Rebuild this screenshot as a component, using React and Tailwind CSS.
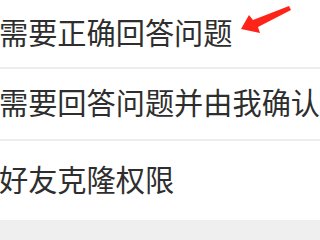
const rows = [
    { text: '需要正确回答问题', h: 'h-[69px]', arrow: true },
    { text: '需要回答问题并由我确认', h: 'h-[72px]' },
    { text: '好友克隆权限', h: 'h-[79px]' },
];

function Arrow() {
    return (
        <svg className="absolute left-[236px] top-[4px]" width="60" height="32" viewBox="236 4 60 32">
            <polygon points="241,29 249,15 253,20 289,6 291,10 258,27 260,33" fill="#ff2418" />
        </svg>
    );
}

export default function App() {
    return (
        <div className="relative h-[240px] w-[320px] overflow-hidden bg-[#efefef] font-['Noto_Sans_CJK_SC','Noto_Sans',sans-serif] text-[29.2px] text-[#2e2e2e]">
            {rows.map((row) => (
                <div key={row.text} className={`flex ${row.h} items-center whitespace-nowrap border-b-2 border-[#ececec] bg-white pb-[4px] last:border-b-0`}>
                    <span className="-ml-px leading-none">{row.text}</span>
                    {row.arrow && <Arrow />}
                </div>
            ))}
        </div>
    );
}
